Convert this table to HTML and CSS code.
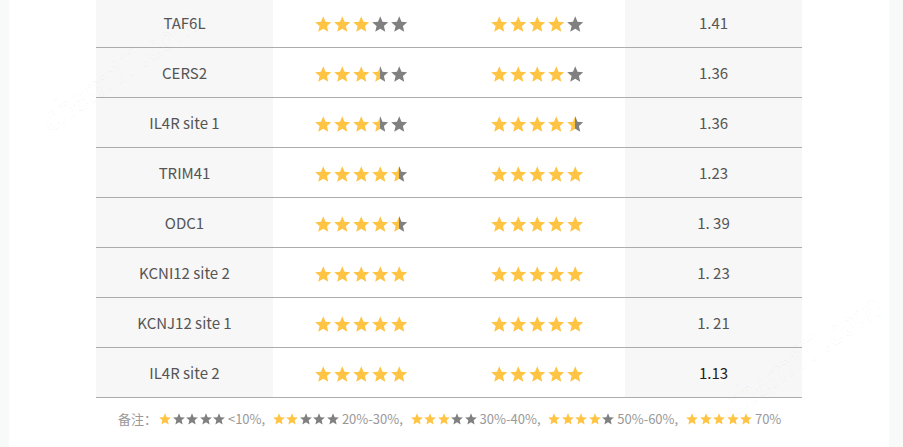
FILE: index.html
```html
<!DOCTYPE html>
<html lang="zh">
<head>
<meta charset="utf-8">
<link rel="stylesheet" href="styles.css">
</head>
<body>
<svg class="defs" width="0" height="0" aria-hidden="true">
  <defs>
    <linearGradient id="half" x1="0" x2="1" y1="0" y2="0">
      <stop offset="0" stop-color="#ffc443"/>
      <stop offset="0.5" stop-color="#ffc443"/>
      <stop offset="0.5" stop-color="#808080"/>
      <stop offset="1" stop-color="#808080"/>
    </linearGradient>
    <symbol id="star" viewBox="0 0 24 24">
      <path d="M12 0.4 L15.28 8.29 L23.79 8.97 L17.31 14.52 L19.29 22.83 L12 18.38 L4.71 22.83 L6.69 14.52 L0.21 8.97 L8.72 8.29 Z"/>
    </symbol>
  </defs>
</svg>
<div class="page">
  <div class="sheet">
    <div class="table">
      <div class="row">
        <div class="cell shade">TAF6L</div>
        <div class="cell"><span class="stars"><svg class="st y"><use href="#star"/></svg><svg class="st y"><use href="#star"/></svg><svg class="st y"><use href="#star"/></svg><svg class="st g"><use href="#star"/></svg><svg class="st g"><use href="#star"/></svg></span></div>
        <div class="cell"><span class="stars"><svg class="st y"><use href="#star"/></svg><svg class="st y"><use href="#star"/></svg><svg class="st y"><use href="#star"/></svg><svg class="st y"><use href="#star"/></svg><svg class="st g"><use href="#star"/></svg></span></div>
        <div class="cell shade">1.41</div>
      </div>
      <div class="row">
        <div class="cell shade">CERS2</div>
        <div class="cell"><span class="stars"><svg class="st y"><use href="#star"/></svg><svg class="st y"><use href="#star"/></svg><svg class="st y"><use href="#star"/></svg><svg class="st h"><use href="#star"/></svg><svg class="st g"><use href="#star"/></svg></span></div>
        <div class="cell"><span class="stars"><svg class="st y"><use href="#star"/></svg><svg class="st y"><use href="#star"/></svg><svg class="st y"><use href="#star"/></svg><svg class="st y"><use href="#star"/></svg><svg class="st g"><use href="#star"/></svg></span></div>
        <div class="cell shade">1.36</div>
      </div>
      <div class="row">
        <div class="cell shade">IL4R site 1</div>
        <div class="cell"><span class="stars"><svg class="st y"><use href="#star"/></svg><svg class="st y"><use href="#star"/></svg><svg class="st y"><use href="#star"/></svg><svg class="st h"><use href="#star"/></svg><svg class="st g"><use href="#star"/></svg></span></div>
        <div class="cell"><span class="stars"><svg class="st y"><use href="#star"/></svg><svg class="st y"><use href="#star"/></svg><svg class="st y"><use href="#star"/></svg><svg class="st y"><use href="#star"/></svg><svg class="st h"><use href="#star"/></svg></span></div>
        <div class="cell shade">1.36</div>
      </div>
      <div class="row">
        <div class="cell shade">TRIM41</div>
        <div class="cell"><span class="stars"><svg class="st y"><use href="#star"/></svg><svg class="st y"><use href="#star"/></svg><svg class="st y"><use href="#star"/></svg><svg class="st y"><use href="#star"/></svg><svg class="st h"><use href="#star"/></svg></span></div>
        <div class="cell"><span class="stars"><svg class="st y"><use href="#star"/></svg><svg class="st y"><use href="#star"/></svg><svg class="st y"><use href="#star"/></svg><svg class="st y"><use href="#star"/></svg><svg class="st y"><use href="#star"/></svg></span></div>
        <div class="cell shade">1.23</div>
      </div>
      <div class="row">
        <div class="cell shade">ODC1</div>
        <div class="cell"><span class="stars"><svg class="st y"><use href="#star"/></svg><svg class="st y"><use href="#star"/></svg><svg class="st y"><use href="#star"/></svg><svg class="st y"><use href="#star"/></svg><svg class="st h"><use href="#star"/></svg></span></div>
        <div class="cell"><span class="stars"><svg class="st y"><use href="#star"/></svg><svg class="st y"><use href="#star"/></svg><svg class="st y"><use href="#star"/></svg><svg class="st y"><use href="#star"/></svg><svg class="st y"><use href="#star"/></svg></span></div>
        <div class="cell shade">1. 39</div>
      </div>
      <div class="row">
        <div class="cell shade">KCNI12 site 2</div>
        <div class="cell"><span class="stars"><svg class="st y"><use href="#star"/></svg><svg class="st y"><use href="#star"/></svg><svg class="st y"><use href="#star"/></svg><svg class="st y"><use href="#star"/></svg><svg class="st y"><use href="#star"/></svg></span></div>
        <div class="cell"><span class="stars"><svg class="st y"><use href="#star"/></svg><svg class="st y"><use href="#star"/></svg><svg class="st y"><use href="#star"/></svg><svg class="st y"><use href="#star"/></svg><svg class="st y"><use href="#star"/></svg></span></div>
        <div class="cell shade">1. 23</div>
      </div>
      <div class="row">
        <div class="cell shade">KCNJ12 site 1</div>
        <div class="cell"><span class="stars"><svg class="st y"><use href="#star"/></svg><svg class="st y"><use href="#star"/></svg><svg class="st y"><use href="#star"/></svg><svg class="st y"><use href="#star"/></svg><svg class="st y"><use href="#star"/></svg></span></div>
        <div class="cell"><span class="stars"><svg class="st y"><use href="#star"/></svg><svg class="st y"><use href="#star"/></svg><svg class="st y"><use href="#star"/></svg><svg class="st y"><use href="#star"/></svg><svg class="st y"><use href="#star"/></svg></span></div>
        <div class="cell shade">1. 21</div>
      </div>
      <div class="row">
        <div class="cell shade">IL4R site 2</div>
        <div class="cell"><span class="stars"><svg class="st y"><use href="#star"/></svg><svg class="st y"><use href="#star"/></svg><svg class="st y"><use href="#star"/></svg><svg class="st y"><use href="#star"/></svg><svg class="st y"><use href="#star"/></svg></span></div>
        <div class="cell"><span class="stars"><svg class="st y"><use href="#star"/></svg><svg class="st y"><use href="#star"/></svg><svg class="st y"><use href="#star"/></svg><svg class="st y"><use href="#star"/></svg><svg class="st y"><use href="#star"/></svg></span></div>
        <div class="cell shade dark">1.13</div>
      </div>
    </div>
    <p class="note">备注：<span class="mini"><svg class="ms y"><use href="#star"/></svg><svg class="ms g"><use href="#star"/></svg><svg class="ms g"><use href="#star"/></svg><svg class="ms g"><use href="#star"/></svg><svg class="ms g"><use href="#star"/></svg></span> &lt;10%, &nbsp;<span class="mini"><svg class="ms y"><use href="#star"/></svg><svg class="ms y"><use href="#star"/></svg><svg class="ms g"><use href="#star"/></svg><svg class="ms g"><use href="#star"/></svg><svg class="ms g"><use href="#star"/></svg></span> 20%-30%, &nbsp;<span class="mini"><svg class="ms y"><use href="#star"/></svg><svg class="ms y"><use href="#star"/></svg><svg class="ms y"><use href="#star"/></svg><svg class="ms g"><use href="#star"/></svg><svg class="ms g"><use href="#star"/></svg></span> 30%-40%, &nbsp;<span class="mini"><svg class="ms y"><use href="#star"/></svg><svg class="ms y"><use href="#star"/></svg><svg class="ms y"><use href="#star"/></svg><svg class="ms y"><use href="#star"/></svg><svg class="ms g"><use href="#star"/></svg></span> 50%-60%, &nbsp;<span class="mini"><svg class="ms y"><use href="#star"/></svg><svg class="ms y"><use href="#star"/></svg><svg class="ms y"><use href="#star"/></svg><svg class="ms y"><use href="#star"/></svg><svg class="ms y"><use href="#star"/></svg></span> 70%</p>
    <span class="wm wm1">chem17.com</span>
    <span class="wm wm2">chem17.com</span>
  </div>
</div>
</body>
</html>
```
FILE: styles.css
```css
html, body {
  margin: 0;
  padding: 0;
  background: #f8f9f9;
  height: 100%;
  overflow: hidden;
}
.defs {
  position: absolute;
  width: 0;
  height: 0;
}
.page {
  display: flex;
  height: 447px;
}
.sheet {
  position: relative;
  margin-left: 9px;
  width: 880px;
  background: #ffffff;
  overflow: hidden;
  font-family: "Noto Sans CJK SC", "Noto Sans", sans-serif;
}
.table {
  margin: -2px 0 0 87px;
  width: 706px;
  display: flex;
  flex-direction: column;
}
.row {
  display: grid;
  grid-template-columns: 177px 176px 176px 177px;
  height: 49px;
  border-bottom: 1px solid #acacac;
}
.cell {
  display: flex;
  align-items: center;
  justify-content: center;
  font-size: 15px;
  color: #555555;
}
.shade {
  background: #f7f7f7;
}
.dark {
  color: #222222;
}
.stars {
  display: inline-flex;
  gap: 2.5px;
  margin-top: 3px;
}
.st {
  width: 16.5px;
  height: 16.5px;
}
.y { fill: #ffc443; }
.g { fill: #808080; }
.h { fill: url(#half); }
.note {
  margin: 11px 0 0 109px;
  font-size: 13px;
  line-height: 20px;
  color: #999999;
}
.mini {
  display: inline-flex;
  gap: 1.5px;
  vertical-align: -1px;
  margin-left: 2px;
}
.ms {
  width: 12px;
  height: 12px;
}
.wm {
  position: absolute;
  font-family: "Open Sans", sans-serif;
  font-size: 32px;
  line-height: 40px;
  font-style: italic;
  font-weight: 600;
  color: transparent;
  -webkit-text-stroke: 1px rgba(0, 0, 0, 0.035);
  transform: rotate(-35deg);
  white-space: nowrap;
  pointer-events: none;
}
.wm1 {
  left: 18px;
  top: 50px;
}
.wm2 {
  left: 700px;
  top: 335px;
}
```
